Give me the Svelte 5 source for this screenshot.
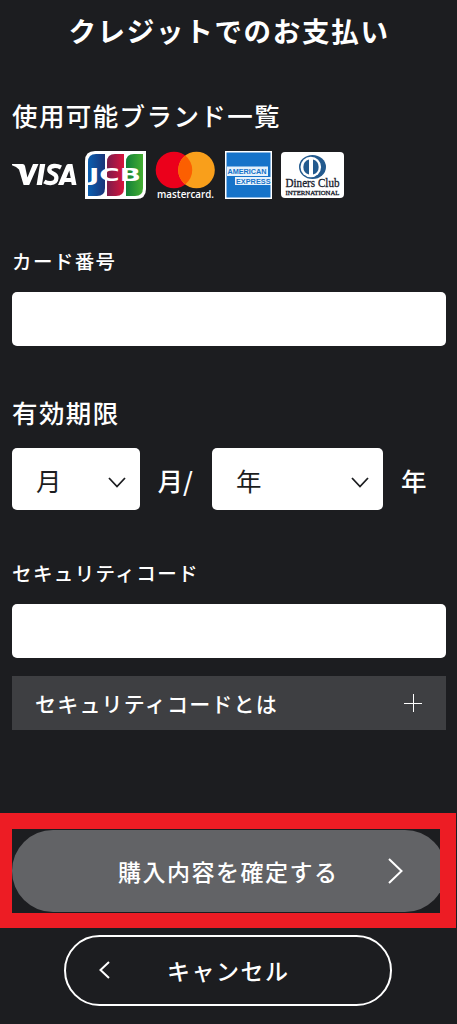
<script lang="ts">
  let cardNumber = "";
  let securityCode = "";
  let month = "";
  let year = "";

  const months = Array.from({ length: 12 }, (_, i) => i + 1);
  const years = Array.from({ length: 10 }, (_, i) => 2024 + i);
</script>

<main>
  <h1>クレジットでのお支払い</h1>

  <h2>使用可能ブランド一覧</h2>
  <div class="brands">
    <svg class="visa" width="65" height="24" viewBox="0 0 65 24">
      <path fill="#fff" d="M0 1H10.500Q12.500 1 13 3L15.400 14.500 21 1H26.500L17.200 22H11.600L7 6.500Q4.500 3.500 0 2.200ZM28 1H33.300L29.900 22H24.600ZM56.200 1H60.400L64.500 22H59.800L59.200 19H52.700L51.400 22H46L54 3Q54.800 1 56.200 1ZM57.300 7.500 54.300 15H58.700Z" />
      <path fill="none" stroke="#fff" stroke-width="4.300" d="M49 4.500Q45.500 2.700 42 3Q37.500 3.400 37.300 6.700Q37.200 8.700 40.800 10.400Q44.600 12.100 44.400 15Q44.200 19.800 38.600 20.100Q35.200 20.200 32.300 18.500" />
    </svg>

    <svg class="jcb" width="61" height="48" viewBox="0 0 61 48">
      <defs>
        <linearGradient id="blue"><stop stop-color="#0b5fb0" /><stop offset="1" stop-color="#1a3478" /></linearGradient>
        <linearGradient id="red"><stop stop-color="#7c1c4b" /><stop offset="1" stop-color="#d8153c" /></linearGradient>
        <linearGradient id="green"><stop stop-color="#128038" /><stop offset="1" stop-color="#45ae32" /></linearGradient>
      </defs>
      <path fill="#fff" d="M10 0H61V38Q61 48 51 48H0V10Q0 0 10 0Z" />
      <path fill="url(#blue)" d="M11 3H20V37Q20 45 12 45H3V11Q3 3 11 3Z" />
      <path fill="url(#red)" d="M30 3H39V37Q39 45 31 45H22V11Q22 3 30 3Z" />
      <path fill="url(#green)" d="M49 3H58V37Q58 45 50 45H41V11Q41 3 49 3Z" />
      <text x="4" y="29.500" textLength="52" lengthAdjust="spacingAndGlyphs">JCB</text>
    </svg>

    <svg class="mastercard" width="60" height="50" viewBox="0 0 60 50">
      <circle cx="19" cy="19" r="18.300" fill="#eb001b" />
      <circle cx="41.500" cy="19" r="18.300" fill="#f99f1b" />
      <path fill="#fc5f01" d="M30.250 4.600A18.300 18.300 0 0 1 30.250 33.400A18.300 18.300 0 0 1 30.250 4.600Z" />
      <text x="2" y="46.500" textLength="57" lengthAdjust="spacingAndGlyphs">mastercard.</text>
    </svg>

    <svg class="amex" width="47" height="48" viewBox="0 0 47 48">
      <rect width="47" height="48" fill="#fff" />
      <rect x="1.500" y="1.500" width="44" height="45" fill="#1673c9" />
      <rect x="2" y="15.500" width="41" height="9.500" fill="#e5f1fb" />
      <rect x="10" y="26" width="36" height="8" fill="#e5f1fb" />
      <text x="2.500" y="23" textLength="39" lengthAdjust="spacingAndGlyphs">AMERICAN</text>
      <text x="11" y="32.800" textLength="34.500" lengthAdjust="spacingAndGlyphs">EXPRESS</text>
    </svg>

    <svg class="diners" width="63" height="46" viewBox="0 0 63 46">
      <rect width="63" height="46" rx="4" fill="#fff" />
      <ellipse cx="31.500" cy="15" rx="13.500" ry="12" fill="#235a8e" />
      <circle cx="29.800" cy="15" r="10.300" fill="#fff" />
      <path fill="#235a8e" d="M28 7.500A7.800 7.800 0 0 0 28 22.500ZM32 7.500A7.800 7.800 0 0 1 32 22.500Z" />
      <text class="club" x="4.500" y="35" textLength="54" lengthAdjust="spacingAndGlyphs">Diners Club</text>
      <text class="intl" x="4.500" y="42.700" textLength="54" lengthAdjust="spacingAndGlyphs">INTERNATIONAL</text>
    </svg>
  </div>

  <label class="small" for="card">カード番号</label>
  <input id="card" type="text" bind:value={cardNumber}>

  <h2 class="expiry">有効期限</h2>
  <div class="date">
    <div class="select month">
      <select bind:value={month} aria-label="月">
        <option value="">月</option>
        {#each months as m}
          <option value={m}>{m}</option>
        {/each}
      </select>
      <svg width="18" height="11" viewBox="0 0 18 11"><path d="M1 1 9 9.500 17 1" /></svg>
    </div>
    <span class="unit-month">月/</span>
    <div class="select year">
      <select bind:value={year} aria-label="年">
        <option value="">年</option>
        {#each years as y}
          <option value={y}>{y}</option>
        {/each}
      </select>
      <svg width="18" height="11" viewBox="0 0 18 11"><path d="M1 1 9 9.500 17 1" /></svg>
    </div>
    <span class="unit-year">年</span>
  </div>

  <label class="small code" for="code">セキュリティコード</label>
  <input id="code" type="text" bind:value={securityCode}>

  <button class="about">
    セキュリティコードとは
    <svg width="18" height="18" viewBox="0 0 18 18"><path d="M0 9.500H18M9.500 0V18" /></svg>
  </button>

  <div class="highlight">
    <button class="confirm">
      <span>購入内容を確定する</span>
      <svg width="15" height="26" viewBox="0 0 15 26"><path d="M1 1 13.500 13 1 25" /></svg>
    </button>
  </div>

  <button class="cancel">
    <svg width="11" height="18" viewBox="0 0 11 18"><path d="M10 1 1.500 9 10 17" /></svg>
    <span>キャンセル</span>
  </button>
</main>

<style>
  :global(body) { background: #1c1d20; }

  main {
    box-sizing: border-box;
    width: 457px;
    height: 1024px;
    padding: 11px 11px 0 12px;
    overflow: hidden;
    background: #1c1d20;
    color: #fff;
    font-family: "Noto Sans CJK JP", sans-serif;
  }

  h1 {
    margin: 0;
    font-size: 27.500px;
    font-weight: 700;
    line-height: 38px;
    letter-spacing: 1.7px;
    text-align: center;
  }

  h2 {
    margin: 47px 0 0;
    font-size: 25.500px;
    font-weight: 500;
    line-height: 38px;
    letter-spacing: 1.4px;
  }

  .brands {
    display: flex;
    height: 48px;
    margin-top: 17px;
  }
  .brands svg { overflow: visible; }
  .visa { margin-top: 12px; }
  .jcb { margin-left: 8px; }
  .mastercard { margin-left: 9px; }
  .amex { margin-left: 10px; }
  .diners { margin: 1px 0 0 9px; }

  .jcb text {
    font: 700 18px "DejaVu Sans", sans-serif;
    fill: #fff;
  }
  .mastercard text {
    font: 600 11px "Open Sans", sans-serif;
    fill: #fff;
  }
  .amex text {
    font: 700 8px "Liberation Sans", sans-serif;
    fill: #1673c9;
  }
  .diners text {
    font-family: "Liberation Serif", serif;
    fill: #17202c;
    stroke: #17202c;
    stroke-width: 0.3;
  }
  .club { font-size: 12.500px; }
  .intl { font-size: 6.500px; }

  .small {
    display: block;
    margin-top: 47px;
    font-size: 19.500px;
    font-weight: 500;
    line-height: 30px;
    letter-spacing: 1.400px;
  }

  input {
    display: block;
    box-sizing: border-box;
    width: 434px;
    height: 54px;
    margin-top: 16px;
    padding: 0 20px;
    border: none;
    border-radius: 5px;
    background: #fff;
    font-size: 24px;
  }

  .expiry { margin-top: 47px; }

  .date {
    display: flex;
    align-items: center;
    height: 62px;
    margin-top: 17px;
    font-size: 25.500px;
    font-weight: 500;
  }

  .select {
    display: flex;
    align-items: center;
    justify-content: space-between;
    box-sizing: border-box;
    height: 62px;
    padding: 0 14px 0 24px;
    border-radius: 5px;
    background: #fff;
  }
  .month { width: 127.500px; }
  .year { width: 171px; }
  .unit-month { width: 54.500px; margin-left: 18px; }
  .unit-year { margin-left: 18px; }

  select {
    appearance: none;
    flex-grow: 1;
    padding: 0;
    border: none;
    background: none;
    color: #1c1d20;
    font: 400 25.500px "Noto Sans CJK JP", sans-serif;
  }
  svg { flex-shrink: 0; }
  .select svg { margin-top: 6px; }
  .select path { fill: none; stroke: #1c1d20; stroke-width: 1.8; }

  .code { margin-top: 48px; }

  button {
    display: flex;
    align-items: center;
    box-sizing: border-box;
    border: none;
    color: #fff;
    font-family: inherit;
    font-weight: 500;
  }
  button path { fill: none; stroke: #fff; stroke-width: 2; }

  .about {
    justify-content: space-between;
    width: 434px;
    height: 54px;
    margin-top: 18px;
    padding: 0 24px 0 23px;
    background: #3e3f42;
    font-size: 21px;
    letter-spacing: 1.2px;
  }
  .about path { stroke-width: 1; }

  .highlight {
    box-sizing: border-box;
    width: 456px;
    height: 115px;
    margin: 83px 0 0 -12px;
    border: solid #ed1c24;
    border-width: 16px 16px 15px 12px;
    overflow: hidden;
  }

  .confirm {
    width: 434px;
    height: 82px;
    margin-top: 1px;
    padding: 0 43px 0 106px;
    justify-content: space-between;
    border-radius: 41px;
    background: #626366;
    font-size: 23px;
    letter-spacing: 1.5px;
  }

  .cancel {
    width: 328px;
    height: 71px;
    margin: 7px 0 0 52px;
    padding: 0 0 1px 33px;
    border: 2px solid #fff;
    border-radius: 36px;
    background: #1c1d20;
    font-size: 23px;
    letter-spacing: 1.5px;
  }
  .cancel span { margin-left: 57px; }
</style>
